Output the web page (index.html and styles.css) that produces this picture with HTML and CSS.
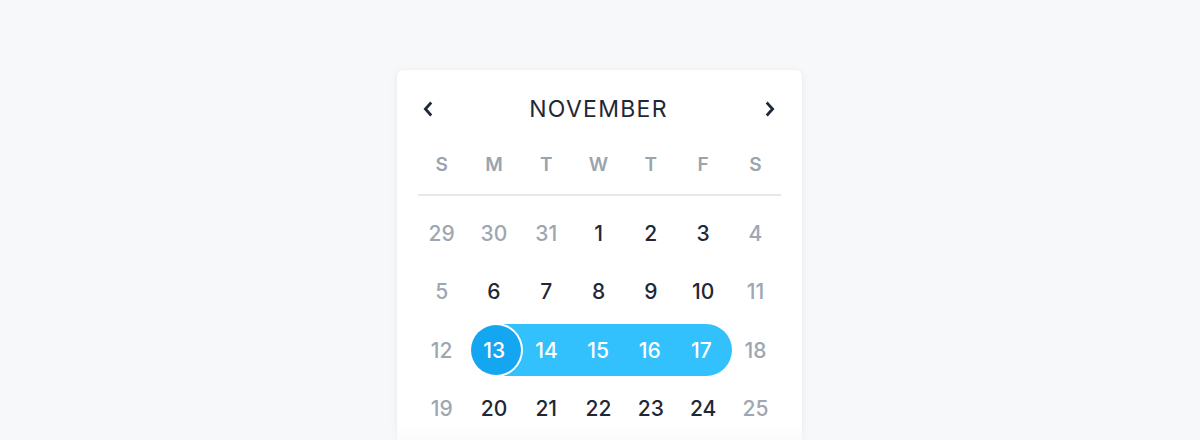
FILE: index.html
```html
<!DOCTYPE html>
<html>
<head>
<meta charset="utf-8">
<link rel="stylesheet" href="styles.css">
</head>
<body>
<div class="stage">
  <div class="card">
    <div class="head">
      <button class="nav" aria-label="Previous month">
        <svg width="12" height="16" viewBox="0 0 12 16"><path d="M8.3 2.6 L3.4 8 L8.3 13.4" fill="none" stroke="#1f2836" stroke-width="2.8" stroke-linecap="square"/></svg>
      </button>
      <div class="month">NOVEMBER</div>
      <button class="nav" aria-label="Next month">
        <svg width="12" height="16" viewBox="0 0 12 16"><path d="M3.7 2.6 L8.6 8 L3.7 13.4" fill="none" stroke="#1f2836" stroke-width="2.8" stroke-linecap="square"/></svg>
      </button>
    </div>
    <div class="weekdays">
      <span>S</span><span>M</span><span>T</span><span>W</span><span>T</span><span>F</span><span>S</span>
    </div>
    <div class="sep"></div>
    <div class="days">
      <span class="d muted">29</span><span class="d muted">30</span><span class="d muted">31</span><span class="d">1</span><span class="d">2</span><span class="d">3</span><span class="d muted">4</span>
      <span class="d muted">5</span><span class="d">6</span><span class="d">7</span><span class="d">8</span><span class="d">9</span><span class="d">10</span><span class="d muted">11</span>
      <span class="d muted">12</span>
      <div class="range">
        <span class="d start">13</span><span class="d">14</span><span class="d">15</span><span class="d">16</span><span class="d">17</span>
      </div>
      <span class="d muted">18</span>
      <span class="d muted">19</span><span class="d">20</span><span class="d">21</span><span class="d">22</span><span class="d">23</span><span class="d">24</span><span class="d muted">25</span>
    </div>
  </div>
  <div class="fade"></div>
</div>
</body>
</html>
```
FILE: styles.css
```css
* { box-sizing: border-box; }
html, body { margin: 0; padding: 0; }
body {
  background: #f7f8f9;
  font-family: Inter, "Noto Sans", "Liberation Sans", sans-serif;
  height: 440px;
  overflow: hidden;
}
.stage {
  position: relative;
  height: 440px;
  display: flex;
  justify-content: center;
  padding-top: 70px;
}
.card {
  width: 405px;
  margin-left: -1px;
  height: 420px;
  background: #fff;
  border-radius: 6px;
  box-shadow: 0 2px 10px rgba(30, 40, 60, 0.06), 0 0 2px rgba(30, 40, 60, 0.05);
  padding: 22px 21px 0 21px;
}
.head {
  display: flex;
  align-items: center;
  justify-content: space-between;
  height: 34px;
}
.nav {
  border: 0;
  background: none;
  padding: 0;
  width: 28px;
  height: 28px;
  display: flex;
  align-items: center;
  justify-content: center;
  margin: 0 -3px 0 -4px;
}
.nav + .month + .nav { margin: 0 -3px 0 0; }
.month {
  font-size: 23px;
  letter-spacing: 1.3px;
  color: #1f2836;
  font-weight: 400;
  padding-left: 2px;
}
.weekdays, .days {
  display: grid;
  grid-template-columns: repeat(7, 52.3px);
  margin-left: -2.5px;
  margin-right: -3.5px;
}
.weekdays {
  margin-top: 18px;
  height: 40px;
  align-items: center;
}
.weekdays span {
  text-align: center;
  font-size: 19px;
  font-weight: 600;
  color: #9aa4ae;
}
.sep {
  height: 2px;
  background: #e6e9ec;
  margin-top: 10px;
}
.days {
  grid-auto-rows: 52px;
  row-gap: 6.5px;
  margin-top: 11px;
}
.d {
  display: flex;
  align-items: center;
  justify-content: center;
  font-size: 21px;
  font-weight: 500;
  color: #1f2836;
}
.d.muted { color: #9ea7b1; }
.range {
  grid-column: 2 / 7;
  display: grid;
  grid-template-columns: 50px repeat(4, 1fr);
  align-items: center;
  background: #33c1fd;
  border-radius: 26px;
  margin-left: 3px;
  margin-right: -3px;
  padding-right: 5px;
  height: 52px;
}
.range .d { color: #fff; height: 52px; }
.range .start {
  background: #15a6f1;
  border-radius: 50%;
  width: 50px;
  height: 50px;
  box-shadow: 0 0 0 2px #fff;
  padding-right: 3px;
}
.fade {
  position: absolute;
  left: 0; right: 0; bottom: 0;
  height: 16px;
  background: linear-gradient(rgba(247,248,249,0), rgba(247,248,249,0.6));
  pointer-events: none;
}
```
